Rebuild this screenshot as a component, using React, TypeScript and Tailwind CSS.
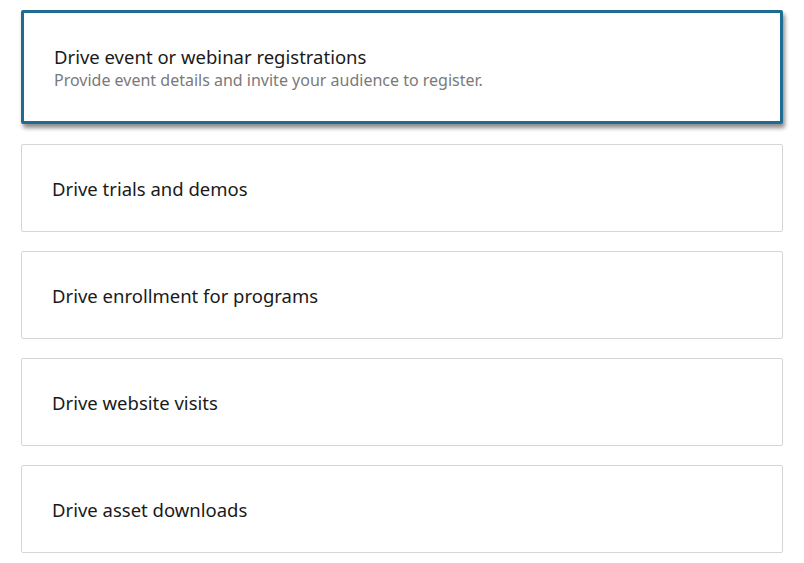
const goals = [
  'Drive trials and demos',
  'Drive enrollment for programs',
  'Drive website visits',
  'Drive asset downloads',
];

export default function App() {
  return (
    <div
      className="min-h-screen bg-white px-[21px] pt-[10px]"
      style={{ fontFamily: '"Noto Sans", "Open Sans", sans-serif' }}
    >
      <div className="flex flex-col gap-[19px]">
        <div className="mb-[1px] flex h-[114px] flex-col justify-center rounded-[2px] border-[3px] border-[#1f6b94] bg-white pl-[30px] shadow-[2px_4px_4px_rgba(0,0,0,0.45)]">
          <div className="text-[18.5px] font-normal leading-[25px] text-[#1a1a1a]">
            Drive event or webinar registrations
          </div>
          <div className="text-[16px] leading-[22px] text-[#7a7a7a]">
            Provide event details and invite your audience to register.
          </div>
        </div>
        {goals.map((g) => (
          <div
            key={g}
            className="flex h-[88px] items-center rounded-[2px] border border-[#d6d6d6] bg-white pl-[30px] pt-[2px]"
          >
            <span className="text-[18.5px] font-normal text-[#1a1a1a]">{g}</span>
          </div>
        ))}
      </div>
    </div>
  );
}
